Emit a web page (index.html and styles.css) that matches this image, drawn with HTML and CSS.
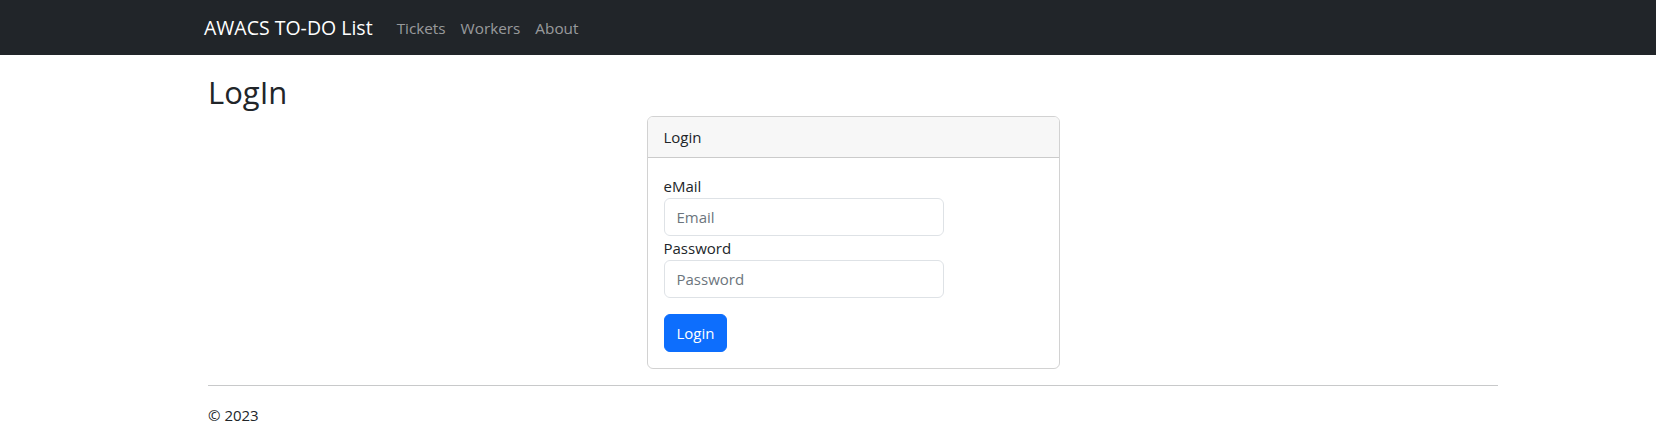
FILE: index.html
```html
<!DOCTYPE html>
<html lang="en">
<head>
<meta charset="utf-8">
<title>LogIn - AWACS TO-DO List</title>
<link rel="stylesheet" href="styles.css">
</head>
<body>
<header class="navbar">
  <div class="navbar-inner">
    <a class="brand" href="#">AWACS TO-DO List</a>
    <nav class="nav">
      <a class="nav-link" href="#">Tickets</a>
      <a class="nav-link" href="#">Workers</a>
      <a class="nav-link" href="#">About</a>
    </nav>
  </div>
</header>
<main class="container">
  <h2 class="page-title">LogIn</h2>
  <div class="row">
    <div class="card">
      <div class="card-header">Login</div>
      <form class="card-body">
        <label class="form-label" for="email">eMail</label>
        <input class="form-control" id="email" type="email" placeholder="Email">
        <label class="form-label" for="password">Password</label>
        <input class="form-control" id="password" type="password" placeholder="Password">
        <button class="btn" type="button">Login</button>
      </form>
    </div>
  </div>
  <hr class="divider">
  <footer class="footer">© 2023</footer>
</main>
</body>
</html>
```
FILE: styles.css
```css
* { box-sizing: border-box; }
body {
  margin: 0;
  font-family: "Open Sans", "Noto Sans", sans-serif;
  font-size: 15px;
  line-height: 24px;
  color: #212529;
  background: #fff;
}
a { text-decoration: none; }
.navbar {
  background: #212529;
  height: 55px;
  display: flex;
  align-items: center;
}
.navbar-inner {
  margin-left: 204px;
  display: flex;
  align-items: center;
}
.brand {
  color: #fff;
  font-size: 19.5px;
  line-height: 30px;
  margin-right: 24px;
}
.nav { display: flex; gap: 15px; }
.nav-link {
  color: rgba(255,255,255,0.55);
  font-size: 15.3px;
  line-height: 24px;
}
.container {
  margin-left: 208px;
  width: 1290px;
}
.page-title {
  font-weight: 400;
  font-size: 31px;
  line-height: 38px;
  margin: 18px 0 5px;
}
.row { display: flex; justify-content: center; }
.card {
  width: 413px;
  border: 1px solid rgba(0,0,0,0.175);
  border-radius: 6px;
  overflow: hidden;
}
.card-header {
  background: #f7f7f7;
  border-bottom: 1px solid rgba(0,0,0,0.175);
  padding: 8px 16px;
  line-height: 24px;
}
.card-body {
  padding: 16px;
  display: flex;
  flex-direction: column;
  align-items: flex-start;
}
.form-label { display: block; line-height: 24px; }
.form-control {
  width: 280px;
  height: 38px;
  padding: 6px 12px;
  font: inherit;
  color: #212529;
  border: 1px solid #dee2e6;
  border-radius: 6px;
  background: #fff;
}
.form-control::placeholder { color: #6c757d; }
.btn {
  margin-top: 16px;
  height: 38px;
  padding: 6px 12px;
  font: inherit;
  color: #fff;
  background: #0d6efd;
  border: 1px solid #0d6efd;
  border-radius: 6px;
}
.divider {
  margin: 16px 0 0;
  border: 0;
  border-top: 1px solid #c8c9ca;
}
.footer { padding-top: 17px; line-height: 24px; }
```
